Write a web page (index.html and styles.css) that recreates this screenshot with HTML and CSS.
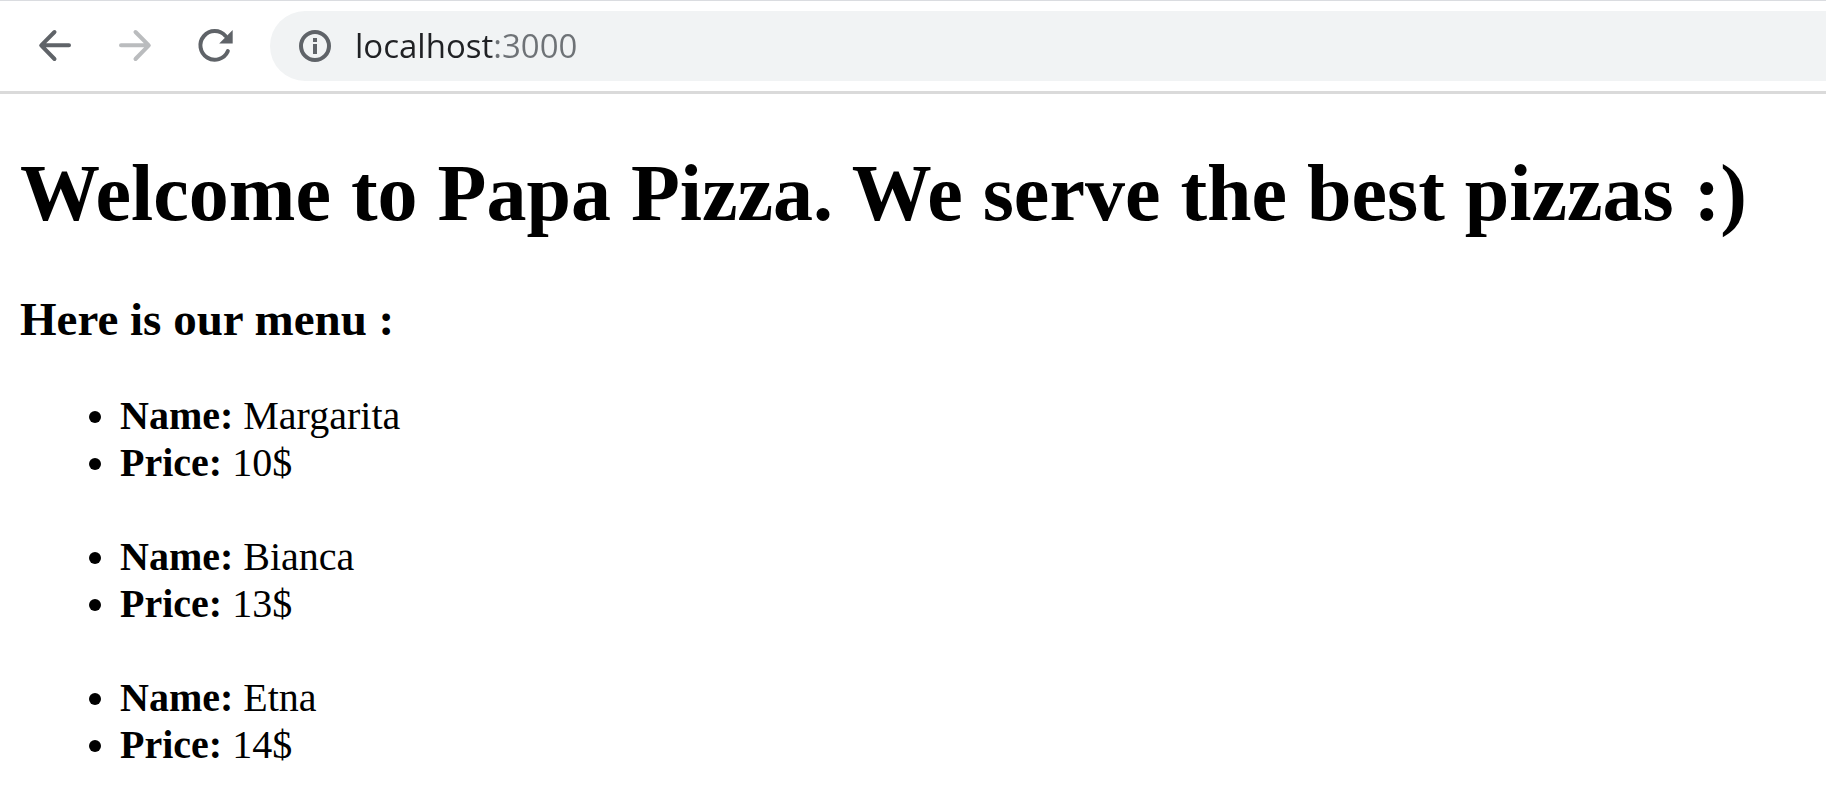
FILE: index.html
```
<!DOCTYPE html>
<html lang="en">
<head>
<meta charset="utf-8">
<title>Papa Pizza</title>
<link rel="stylesheet" href="styles.css">
</head>
<body>
<header class="toolbar">
  <nav class="nav">
    <button class="nav-button" type="button" aria-label="Back">
      <svg class="icon" viewBox="0 0 40 40"><path d="M34 19.3H6.5M19.5 6L6.2 19.3L19.5 33"/></svg>
    </button>
    <button class="nav-button" type="button" aria-label="Forward" disabled>
      <svg class="icon" viewBox="0 0 40 40"><path d="M6 19.3H33.5M20.5 6L33.8 19.3L20.5 33"/></svg>
    </button>
    <button class="nav-button" type="button" aria-label="Reload">
      <svg class="icon" viewBox="0 0 40 40"><path d="M32.8 25.2A14.3 14.3 0 1 1 30.5 10"/><path class="solid" d="M37.7 4V17.5H24.2Z"/></svg>
    </button>
  </nav>
  <div class="address">
    <svg class="icon" viewBox="0 0 40 40" aria-hidden="true"><circle cx="20" cy="20" r="14"/><path class="solid" d="M18 12h4v4h-4zM18 18h4v10h-4z"/></svg>
    <input class="url" type="text" value="localhost:3000" aria-label="Address" spellcheck="false">
  </div>
</header>
<main class="page">
  <h1 class="title">Welcome to Papa Pizza. We serve the best pizzas :)</h1>
  <h3 class="subtitle">Here is our menu :</h3>
  <div class="menu">
    <ul class="pizza">
      <li><b>Name:</b> Margarita</li>
      <li><b>Price:</b> 10$</li>
    </ul>
    <ul class="pizza">
      <li><b>Name:</b> Bianca</li>
      <li><b>Price:</b> 13$</li>
    </ul>
    <ul class="pizza">
      <li><b>Name:</b> Etna</li>
      <li><b>Price:</b> 14$</li>
    </ul>
  </div>
</main>
</body>
</html>
```
FILE: styles.css
```
body {
  margin: 0;
  background: #fff;
  color: #000;
  font-family: "Liberation Serif", "Times New Roman", serif;
  font-size: 40px;
  line-height: 47px;
}

.toolbar {
  display: flex;
  align-items: center;
  gap: 35px;
  padding: 10px 0 10px 35px;
  border-top: 1px solid #dadce0;
  border-bottom: 3px solid #dadada;
}

.nav {
  display: flex;
  gap: 40px;
}

.nav-button {
  display: flex;
  padding: 0;
  border: 0;
  background: none;
  color: #5f6368;
}

.nav-button:disabled {
  color: #babcbe;
}

.icon {
  flex: none;
  width: 40px;
  height: 40px;
  fill: none;
  stroke: currentColor;
  stroke-width: 4;
  stroke-linecap: round;
  stroke-linejoin: round;
}

.icon .solid {
  fill: currentColor;
  stroke: none;
}

.address {
  display: flex;
  flex: 1;
  align-items: center;
  gap: 20px;
  height: 70px;
  padding-left: 25px;
  border-radius: 35px 0 0 35px;
  background: #f1f3f4;
  color: #5f6368;
}

/* The host is dark and the port is grey. */
.url {
  --host-width: 138px;
  flex: 1;
  min-width: 0;
  padding: 0;
  border: 0;
  outline: 0;
  background: linear-gradient(to right, #202124 var(--host-width), #6e7276 var(--host-width));
  background-clip: text;
  color: transparent;
  font: 33px/48px "Open Sans", "Noto Sans", sans-serif;
}

.page {
  padding: 53px 20px 20px;
}

.title {
  margin: 0 0 53px;
  font-size: 80px;
  line-height: 92px;
}

.subtitle {
  margin: 0 0 46px;
  font-size: 47px;
  line-height: 54px;
}

.menu {
  display: grid;
  gap: 47px;
}

.pizza {
  margin: 0;
  padding-left: 100px;
}
```
